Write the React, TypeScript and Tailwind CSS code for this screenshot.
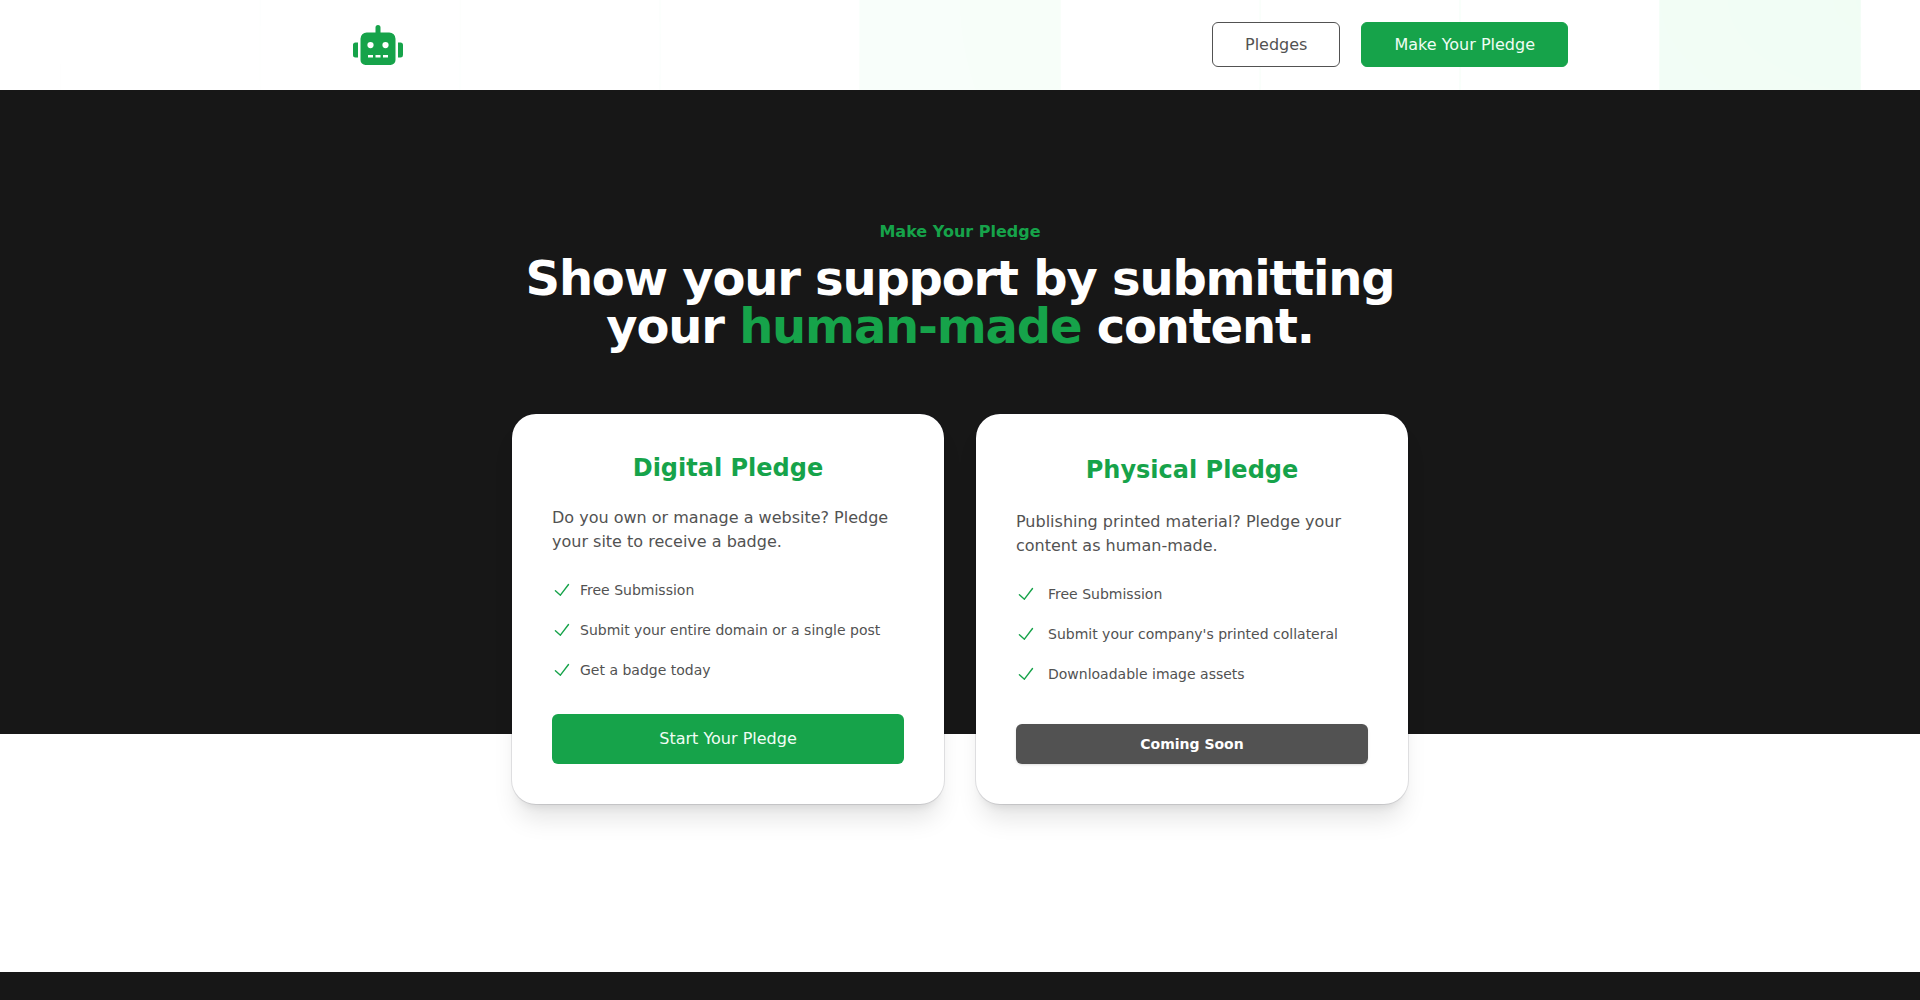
import { FaRobot } from "react-icons/fa";

interface PledgeCardProps {
  title: string;
  description: string;
  features: string[];
  titleClass: string;
  featureClass: string;
  children: React.ReactNode;
}

const digitalFeatures = [
  "Free Submission",
  "Submit your entire domain or a single post",
  "Get a badge today",
];

const physicalFeatures = [
  "Free Submission",
  "Submit your company's printed collateral",
  "Downloadable image assets",
];

function CheckIcon() {
  return (
    <svg
      viewBox="0 0 20 20"
      fill="none"
      stroke="currentColor"
      strokeWidth={1.4}
      strokeLinecap="round"
      strokeLinejoin="round"
      className="h-6 w-5 flex-none text-[#16a34a]"
      aria-hidden="true"
    >
      <path d="M3.4 10.8l5 4.4 8.1-10.7" />
    </svg>
  );
}

function GridBackground() {
  return (
    <svg
      className="absolute top-0 left-0 -z-10 h-screen w-full stroke-green-50 [mask-image:radial-gradient(100%_100%_at_top_right,white,transparent)]"
      aria-hidden="true"
    >
      <defs>
        <pattern
          id="grid-pattern"
          width={200}
          height={200}
          x="50%"
          y={-1}
          patternUnits="userSpaceOnUse"
        >
          <path d="M100 200V.5M.5 .5H200" fill="none" />
        </pattern>
      </defs>
      <svg x="50%" y={-1} className="overflow-visible fill-green-50">
        <path
          d="M-100.5 0h201v201h-201Z M699.5 0h201v201h-201Z"
          strokeWidth={0}
        />
      </svg>
      <rect width="100%" height="100%" strokeWidth={0} fill="url(#grid-pattern)" />
    </svg>
  );
}

function Header() {
  return (
    <header className="relative isolate overflow-hidden bg-white">
      <GridBackground />
      <nav className="mx-auto flex max-w-7xl items-center justify-between px-8 pt-[22px] pb-[23px]">
        <a href="#" aria-label="Home">
          <FaRobot className="h-10 w-[52px] text-[#16a34a]" />
        </a>
        <div className="flex items-center gap-[21px]">
          <a
            href="#pledges"
            className="flex h-[45px] items-center rounded-md border border-neutral-600 bg-white px-8 text-base text-neutral-600"
          >
            Pledges
          </a>
          <a
            href="#pledge"
            className="flex h-[45px] items-center rounded-md border border-[#16a34a] bg-[#16a34a] px-8 text-base text-green-50"
          >
            Make Your Pledge
          </a>
        </div>
      </nav>
    </header>
  );
}

function PledgeCard(props: PledgeCardProps) {
  return (
    <div className="flex flex-col justify-between rounded-3xl bg-white p-10 shadow-xl ring-1 ring-gray-900/10">
      <div>
        <h3
          className={`text-center text-2xl font-bold text-[#16a34a] ${props.titleClass}`}
        >
          {props.title}
        </h3>
        <p className="mt-6 text-base text-neutral-600">{props.description}</p>
        <ul className="mt-6 space-y-4 text-sm leading-6 text-neutral-600">
          {props.features.map((feature) => (
            <li key={feature} className={`flex ${props.featureClass}`}>
              <CheckIcon />
              {feature}
            </li>
          ))}
        </ul>
      </div>
      {props.children}
    </div>
  );
}

export default function App() {
  return (
    <div className="flex min-h-screen flex-col bg-white font-['DejaVu_Sans',sans-serif]">
      <Header />
      <main>
        <section className="bg-neutral-900 px-8 pt-32 pb-96 text-center">
          <div className="mx-auto max-w-4xl">
            <p className="text-base leading-7 font-semibold text-[#16a34a]">
              Make Your Pledge
            </p>
            <h2 className="mt-2 text-5xl leading-none font-bold tracking-tight text-white">
              Show your support by submitting your{" "}
              <span className="text-[#16a34a]">human-made</span> content.
            </h2>
          </div>
        </section>
        <section id="pledge" className="flow-root bg-white px-8 pb-42">
          <div className="relative mx-auto -mt-80 grid max-w-4xl gap-8 md:grid-cols-2">
            <PledgeCard
              title="Digital Pledge"
              description="Do you own or manage a website? Pledge your site to receive a badge."
              features={digitalFeatures}
              titleClass="leading-7"
              featureClass="gap-x-2"
            >
              <a
                href="#start"
                className="mt-8 flex h-[50px] items-center justify-center rounded-md bg-[#16a34a] text-base text-green-50"
              >
                Start Your Pledge
              </a>
            </PledgeCard>
            <PledgeCard
              title="Physical Pledge"
              description="Publishing printed material? Pledge your content as human-made."
              features={physicalFeatures}
              titleClass="leading-8"
              featureClass="gap-x-3"
            >
              <button
                type="button"
                className="mt-8 h-10 rounded-md bg-neutral-600 text-sm font-semibold text-white shadow-sm"
              >
                Coming Soon
              </button>
            </PledgeCard>
          </div>
        </section>
      </main>
      <footer className="min-h-7 grow bg-neutral-900" />
    </div>
  );
}
